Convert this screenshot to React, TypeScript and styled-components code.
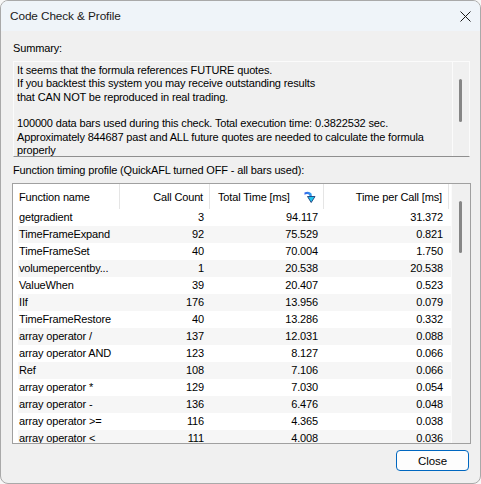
import React from "react";
import styled, { createGlobalStyle } from "styled-components";

const GlobalStyle = createGlobalStyle`
  html, body {
    margin: 0;
    padding: 0;
    background: #f7f7f7;
  }
  * {
    box-sizing: border-box;
  }
`;

const FONT = `"Liberation Sans", Arial, sans-serif`;

const SWindow = styled.div`
  width: 481px;
  height: 484px;
  display: flex;
  flex-direction: column;
  background: #f0f0f0;
  border: 1px solid #a9a9a9;
  border-radius: 8px;
  overflow: hidden;
  font-family: ${FONT};
  font-size: 11px;
  letter-spacing: -0.15px;
  color: #000;
`;

const STitleBar = styled.div`
  height: 30px;
  flex: none;
  display: flex;
  align-items: center;
  justify-content: space-between;
  padding: 0 9px 0 9px;
  background: #eff4f9;
`;

const STitle = styled.div`
  font-size: 11.8px;
  letter-spacing: -0.1px;
  color: #1a1a1a;
`;

const SCloseX = styled.svg`
  width: 11px;
  height: 11px;
  margin-top: 1px;
`;

const SBody = styled.div`
  flex: 1;
  display: flex;
  flex-direction: column;
  padding: 0 9px 0 11px;
`;

const SLabel = styled.div<{ $top: number }>`
  height: 14px;
  line-height: 14px;
  margin-top: ${(p) => p.$top}px;
  padding-left: 1px;
`;

const SSummaryBox = styled.div`
  margin: 6px 1px 0 1px;
  height: 96px;
  display: flex;
  border: 1px solid #fbfbfb;
  border-bottom: 1px solid #8f8f8f;
`;

const SSummaryText = styled.div`
  flex: 1;
  padding: 2px 3px 0 3px;
  line-height: 13.35px;
  overflow: hidden;
`;

const SLine = styled.div`
  white-space: nowrap;
  min-height: 13.35px;
`;

const STrack = styled.div<{ $width: number; $thumbTop: number; $thumbHeight: number; $thumbLeft: number }>`
  position: relative;
  width: ${(p) => p.$width}px;
  flex: none;
  background: #f0f0f0;
  border-left: 1px solid #fbfbfb;

  &::after {
    content: "";
    position: absolute;
    left: ${(p) => p.$thumbLeft}px;
    top: ${(p) => p.$thumbTop}px;
    width: 3px;
    height: ${(p) => p.$thumbHeight}px;
    border-radius: 2px;
    background: #868686;
  }
`;

const SList = styled.div`
  margin-top: 6px;
  height: 261px;
  display: flex;
  background: #fff;
  border: 1px solid #a0a0a0;
  overflow: hidden;
`;

const STable = styled.div`
  flex: 1;
  padding-left: 5px;
  overflow: hidden;
`;

const COLS = "102px 90px 114px 125px";

const SHeader = styled.div`
  display: grid;
  grid-template-columns: ${COLS};
  height: 25px;
`;

const SHeadCell = styled.div<{ $align: "left" | "right" }>`
  display: flex;
  align-items: center;
  justify-content: ${(p) => (p.$align === "right" ? "flex-end" : "flex-start")};
  padding: ${(p) => (p.$align === "right" ? "0 6px 0 0" : "0 0 0 1px")};
  border-right: 1px solid #e5e5e5;
  white-space: nowrap;
`;

const SSortHead = styled(SHeadCell)`
  justify-content: space-between;
  padding: 0 7px 0 8px;
`;

const SRow = styled.div<{ $striped: boolean }>`
  display: grid;
  grid-template-columns: ${COLS};
  height: 17px;
  line-height: 17px;
  background: ${(p) => (p.$striped ? "#f6f6f6" : "#fff")};
`;

const SCell = styled.div<{ $align: "left" | "right" }>`
  text-align: ${(p) => p.$align};
  padding: ${(p) => (p.$align === "right" ? "0 6px 0 0" : "0 0 0 1px")};
  white-space: nowrap;
  overflow: hidden;
`;

const SFooter = styled.div`
  display: flex;
  justify-content: flex-end;
  margin-top: 6px;
`;

const SButton = styled.button`
  width: 73px;
  height: 21px;
  margin-right: 2px;
  padding: 0;
  background: #fdfdfd;
  border: 1px solid #0067c0;
  border-radius: 4px;
  font-family: ${FONT};
  font-size: 11.5px;
  letter-spacing: -0.1px;
  color: #000;
`;

const summary = [
  "It seems that the formula references FUTURE quotes.",
  "If you backtest this system you may receive outstanding results",
  "that CAN NOT be reproduced in real trading.",
  "",
  "100000 data bars used during this check. Total execution time: 0.3822532 sec.",
  "Approximately 844687 past and ALL future quotes are needed to calculate the formula",
  "properly",
];

const rows: [string, string, string, string][] = [
  ["getgradient", "3", "94.117", "31.372"],
  ["TimeFrameExpand", "92", "75.529", "0.821"],
  ["TimeFrameSet", "40", "70.004", "1.750"],
  ["volumepercentby...", "1", "20.538", "20.538"],
  ["ValueWhen", "39", "20.407", "0.523"],
  ["IIf", "176", "13.956", "0.079"],
  ["TimeFrameRestore", "40", "13.286", "0.332"],
  ["array operator /", "137", "12.031", "0.088"],
  ["array operator AND", "123", "8.127", "0.066"],
  ["Ref", "108", "7.106", "0.066"],
  ["array operator *", "129", "7.030", "0.054"],
  ["array operator -", "136", "6.476", "0.048"],
  ["array operator >=", "116", "4.365", "0.038"],
  ["array operator <", "111", "4.008", "0.036"],
];

const SortArrow = () => (
  <svg width="12" height="14" viewBox="0 0 12 14">
    <defs>
      <linearGradient id="band" x1="0" y1="0" x2="1" y2="0">
        <stop offset="0" stopColor="#2f5de8" />
        <stop offset="1" stopColor="#3aa8f0" />
      </linearGradient>
    </defs>
    <path d="M0.5 2.5 Q5 0.5 7.5 3.5 L8 6.5 L5.5 6.5 L5.2 5 Q3.5 3.2 0.5 4.8 Z" fill="url(#band)" />
    <path d="M3.5 6.5 L11 6.5 L7.2 12.5 Z" fill="#22c6ee" stroke="#1e3c78" strokeWidth="0.9" strokeLinejoin="round" />
  </svg>
);

export default function App() {
  return (
    <>
      <GlobalStyle />
      <SWindow>
        <STitleBar>
          <STitle>Code Check &amp; Profile</STitle>
          <SCloseX viewBox="0 0 11 11">
            <path d="M0.5 0.5 L10.5 10.5 M10.5 0.5 L0.5 10.5" stroke="#1a1a1a" strokeWidth="1" />
          </SCloseX>
        </STitleBar>
        <SBody>
          <SLabel $top={10}>Summary:</SLabel>
          <SSummaryBox>
            <SSummaryText>
              {summary.map((line, i) => (
                <SLine key={i}>{line}</SLine>
              ))}
            </SSummaryText>
            <STrack $width={17} $thumbLeft={6} $thumbTop={17} $thumbHeight={43} />
          </SSummaryBox>
          <SLabel $top={6}>Function timing profile (QuickAFL turned OFF - all bars used):</SLabel>
          <SList>
            <STable>
              <SHeader>
                <SHeadCell $align="left">Function name</SHeadCell>
                <SHeadCell $align="right">Call Count</SHeadCell>
                <SSortHead $align="left">
                  <span>Total Time [ms]</span>
                  <SortArrow />
                </SSortHead>
                <SHeadCell $align="right">Time per Call [ms]</SHeadCell>
              </SHeader>
              {rows.map((r, i) => (
                <SRow key={r[0]} $striped={i % 2 === 1}>
                  <SCell $align="left">{r[0]}</SCell>
                  <SCell $align="right">{r[1]}</SCell>
                  <SCell $align="right">{r[2]}</SCell>
                  <SCell $align="right">{r[3]}</SCell>
                </SRow>
              ))}
            </STable>
            <STrack $width={19} $thumbLeft={7} $thumbTop={17} $thumbHeight={52} />
          </SList>
          <SFooter>
            <SButton>Close</SButton>
          </SFooter>
        </SBody>
      </SWindow>
    </>
  );
}
